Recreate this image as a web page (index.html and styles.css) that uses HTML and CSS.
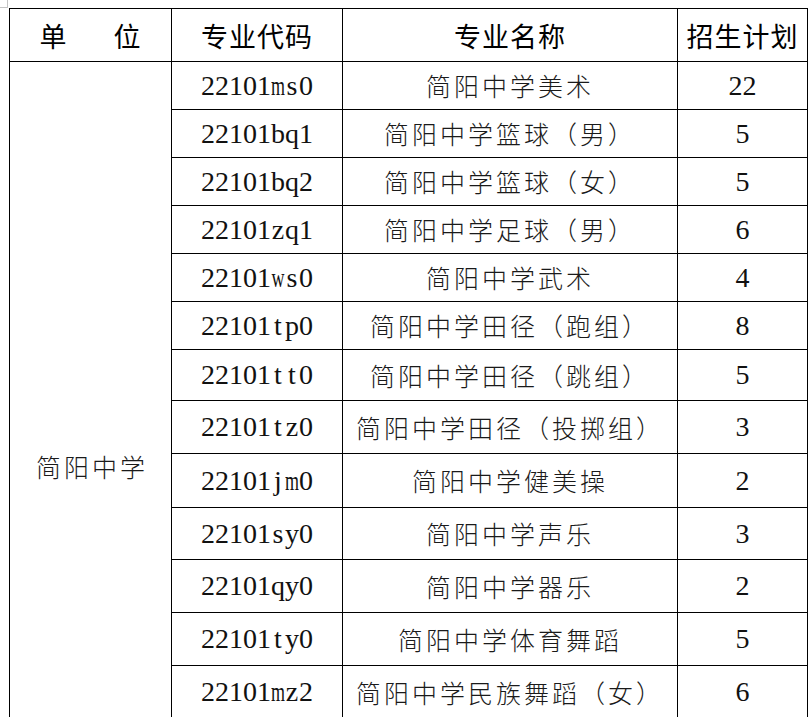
FILE: index.html
```html
<!DOCTYPE html>
<html lang="zh-CN">
<head>
<meta charset="utf-8">
<title>招生计划</title>
<link rel="stylesheet" href="styles.css">
</head>
<body>
<div class="corner-mark"></div>
<table class="plan">
  <colgroup>
    <col class="c-unit">
    <col class="c-code">
    <col class="c-name">
    <col class="c-num">
  </colgroup>
  <thead>
    <tr class="h-head">
      <th><span class="unit-head"><span>单</span><span>位</span></span></th>
      <th>专业代码</th>
      <th>专业名称</th>
      <th>招生计划</th>
    </tr>
  </thead>
  <tbody>
    <tr class="h48">
      <td class="unit" rowspan="13"><div class="unit-label">简阳中学</div></td>
      <td class="code"><span>2</span><span>2</span><span>1</span><span>0</span><span>1</span><span class="wide">m</span><span>s</span><span>0</span></td><td class="name">简阳中学美术</td><td class="num">22</td>
    </tr>
    <tr class="h48"><td class="code"><span>2</span><span>2</span><span>1</span><span>0</span><span>1</span><span>b</span><span>q</span><span>1</span></td><td class="name">简阳中学篮球（男）</td><td class="num">5</td></tr>
    <tr class="h48"><td class="code"><span>2</span><span>2</span><span>1</span><span>0</span><span>1</span><span>b</span><span>q</span><span>2</span></td><td class="name">简阳中学篮球（女）</td><td class="num">5</td></tr>
    <tr class="h48"><td class="code"><span>2</span><span>2</span><span>1</span><span>0</span><span>1</span><span>z</span><span>q</span><span>1</span></td><td class="name">简阳中学足球（男）</td><td class="num">6</td></tr>
    <tr class="h48"><td class="code"><span>2</span><span>2</span><span>1</span><span>0</span><span>1</span><span class="wide">w</span><span>s</span><span>0</span></td><td class="name">简阳中学武术</td><td class="num">4</td></tr>
    <tr class="h48"><td class="code"><span>2</span><span>2</span><span>1</span><span>0</span><span>1</span><span>t</span><span>p</span><span>0</span></td><td class="name">简阳中学田径（跑组）</td><td class="num">8</td></tr>
    <tr class="h51"><td class="code"><span>2</span><span>2</span><span>1</span><span>0</span><span>1</span><span>t</span><span>t</span><span>0</span></td><td class="name">简阳中学田径（跳组）</td><td class="num">5</td></tr>
    <tr class="h53"><td class="code"><span>2</span><span>2</span><span>1</span><span>0</span><span>1</span><span>t</span><span>z</span><span>0</span></td><td class="name">简阳中学田径（投掷组）</td><td class="num">3</td></tr>
    <tr class="h54"><td class="code"><span>2</span><span>2</span><span>1</span><span>0</span><span>1</span><span>j</span><span class="wide">m</span><span>0</span></td><td class="name">简阳中学健美操</td><td class="num">2</td></tr>
    <tr class="h52"><td class="code"><span>2</span><span>2</span><span>1</span><span>0</span><span>1</span><span>s</span><span>y</span><span>0</span></td><td class="name">简阳中学声乐</td><td class="num">3</td></tr>
    <tr class="h53"><td class="code"><span>2</span><span>2</span><span>1</span><span>0</span><span>1</span><span>q</span><span>y</span><span>0</span></td><td class="name">简阳中学器乐</td><td class="num">2</td></tr>
    <tr class="h53"><td class="code"><span>2</span><span>2</span><span>1</span><span>0</span><span>1</span><span>t</span><span>y</span><span>0</span></td><td class="name">简阳中学体育舞蹈</td><td class="num">5</td></tr>
    <tr class="h53"><td class="code"><span>2</span><span>2</span><span>1</span><span>0</span><span>1</span><span class="wide">m</span><span>z</span><span>2</span></td><td class="name">简阳中学民族舞蹈（女）</td><td class="num">6</td></tr>
  </tbody>
</table>
</body>
</html>
```

FILE: styles.css
```css
html, body {
  margin: 0;
  padding: 0;
  background: #ffffff;
  overflow: hidden;
}

.corner-mark {
  width: 8px;
  height: 8px;
  box-sizing: border-box;
  border-right: 1px solid #c4c4c4;
  border-bottom: 1px solid #c4c4c4;
}

.plan {
  margin-left: 9px;
  border-collapse: collapse;
  table-layout: fixed;
  width: 798px;
  color: #111111;
}

.c-unit { width: 162px; }
.c-code { width: 171px; }
.c-name { width: 335px; }
.c-num { width: 130px; }

.plan th,
.plan td {
  border: 1px solid #000000;
  padding: 0;
  text-align: center;
  vertical-align: middle;
  white-space: nowrap;
}

.plan th {
  font-family: "Noto Sans CJK SC", "Noto Sans", sans-serif;
  font-weight: 400;
  font-size: 27px;
  letter-spacing: 1px;
  color: #000000;
  line-height: 1;
}

.h-head { height: 53px; }
.h48 { height: 48px; }
.h51 { height: 51px; }
.h52 { height: 52px; }
.h53 { height: 53px; }
.h54 { height: 54px; }

.unit-head {
  display: inline-flex;
  gap: 46px;
}

.plan td {
  line-height: 1;
}

.code {
  font-family: "Liberation Serif", "Times New Roman", serif;
  font-size: 28px;
  padding-right: 3px;
}

.code span {
  display: inline-block;
  width: 14px;
  text-align: center;
}

.code span.wide {
  font-size: 18px;
  transform: scaleY(1.5);
  transform-origin: 50% 78%;
}

.num {
  font-family: "Liberation Serif", "Times New Roman", serif;
  font-size: 28px;
}

.name,
.unit-label {
  font-family: "Noto Sans CJK SC", sans-serif;
  font-weight: 300;
  font-size: 25px;
  letter-spacing: 3px;
  color: #1a1a1a;
}

.plan td.unit {
  vertical-align: top;
}

.unit-label {
  padding-top: 392px;
  padding-left: 3px;
}
```
